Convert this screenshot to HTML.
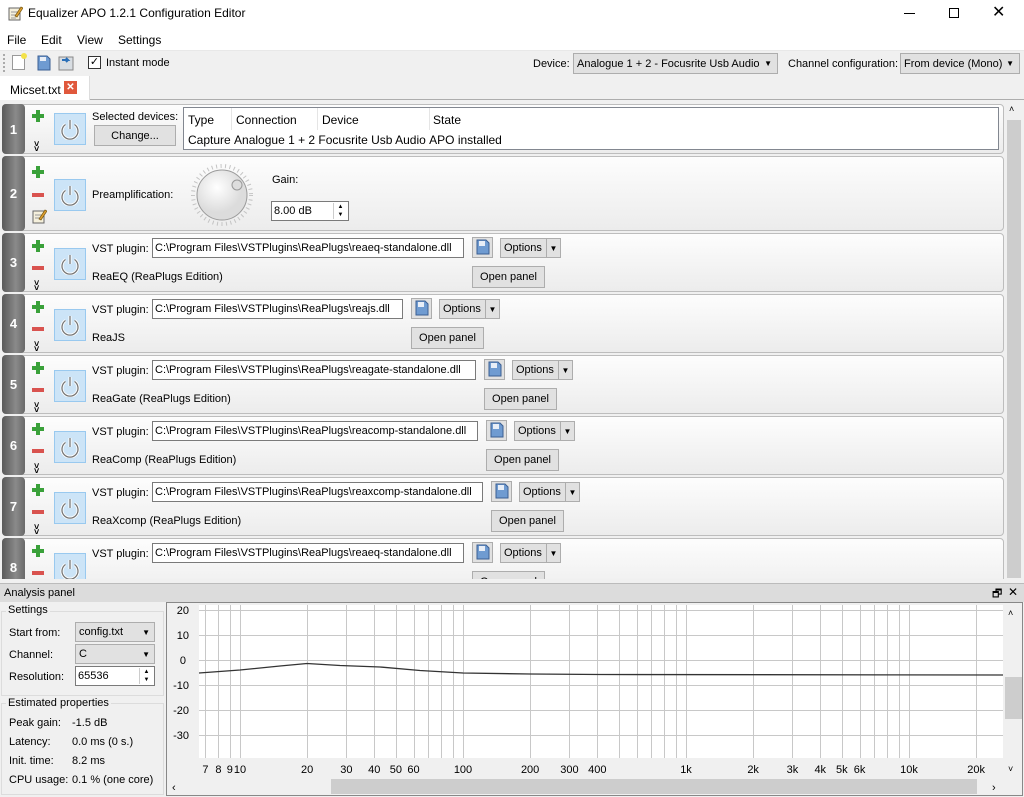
<!DOCTYPE html>
<html><head><meta charset="utf-8"><style>
*{box-sizing:border-box;margin:0;padding:0}
body{width:1024px;height:797px;position:relative;overflow:hidden;background:#f0f0f0;font-family:"Liberation Sans",sans-serif;font-size:11px;color:#000}
.a{position:absolute;white-space:nowrap}
.card{position:absolute;left:2px;width:1002px;border:1px solid #bdbdbd;border-radius:4px;background:linear-gradient(#fdfdfd,#ececec)}
.num{position:absolute;left:2px;width:23px;border-radius:4px;background:linear-gradient(90deg,#5a5a5a,#8a8a8a 60%,#6a6a6a);color:#fff;font-weight:bold;font-size:13px;display:flex;align-items:center;justify-content:center}
.pw{position:absolute;width:32px;height:32px;background:#cce4f7;border:1px solid #99c9ef}
.pw svg{position:absolute;left:4px;top:4px}
.inp{position:absolute;height:20px;background:#fff;border:1px solid #7a7a7a;padding:3px 2px;font-size:11px}
.btn{position:absolute;height:21px;background:#e1e1e1;border:1px solid #adadad;text-align:center;line-height:19px}
.plus{position:absolute;width:12px;height:12px}
.plus:before{content:"";position:absolute;left:4px;top:0;width:4px;height:12px;background:#3aa13a}
.plus:after{content:"";position:absolute;left:0;top:4px;width:12px;height:4px;background:#3aa13a}
.minus{position:absolute;width:12px;height:4px;background:#d9534f}
.chev{position:absolute;font-size:9px;line-height:5px;font-weight:bold}
</style></head><body>
<div class="a" style="left:0;top:0;width:1024px;height:50px;background:#fff"></div>
<svg class="a" style="left:7px;top:5px" width="16" height="16"><rect x="2" y="3" width="11" height="12" fill="#f5f0dc" stroke="#666"/><path d="M4 7h7M4 10h7M4 13h5" stroke="#999"/><path d="M8 11l6-9 2 1-6 9z" fill="#e0a030" stroke="#7a5a10" stroke-width=".7"/></svg>
<div class="a" style="left:28px;top:6px;font-size:12px">Equalizer APO 1.2.1 Configuration Editor</div>
<div class="a" style="left:904px;top:13px;width:11px;height:1px;background:#000"></div>
<div class="a" style="left:949px;top:8px;width:10px;height:10px;border:1px solid #000"></div>
<div class="a" style="left:992px;top:2px;font-size:16px">✕</div>
<div class="a" style="left:7px;top:33px;font-size:12px">File</div>
<div class="a" style="left:41px;top:33px;font-size:12px">Edit</div>
<div class="a" style="left:77px;top:33px;font-size:12px">View</div>
<div class="a" style="left:118px;top:33px;font-size:12px">Settings</div>
<div class="a" style="left:0;top:50px;width:1024px;height:1px;background:#e8e8e8"></div>
<div class="a" style="left:3px;top:54px;width:1px;height:18px;border-left:2px dotted #aaa"></div>
<div class="a" style="left:12px;top:55px;width:13px;height:15px;border:1px solid #999;background:#fff"></div>
<div class="a" style="left:21px;top:53px;width:6px;height:6px;border-radius:50%;background:#f3e24a"></div>
<svg class="a" style="left:35px;top:54px" width="18" height="18"><path d="M3 2h9l3 3v11H3z" fill="#6f9bd1" stroke="#3b5f93"/><rect x="5" y="3" width="6" height="4" fill="#e8eef7"/></svg>
<svg class="a" style="left:57px;top:54px" width="18" height="18"><rect x="2" y="3" width="14" height="13" fill="#d8dde2" stroke="#888"/><path d="M5 6h6l-2 -2M11 6l-2 2" stroke="#2a6fb8" stroke-width="2" fill="none"/></svg>
<div class="a" style="left:88px;top:56px;width:13px;height:13px;border:1px solid #333;background:#fff;font-size:11px;line-height:11px;text-align:center">✓</div>
<div class="a" style="left:106px;top:57px">Instant mode</div>
<div class="a" style="left:533px;top:58px">Device:</div>
<div class="btn" style="left:573px;top:53px;width:205px;text-align:left;padding-left:3px;line-height:20px">Analogue 1 + 2 - Focusrite Usb Audio<span style="position:absolute;right:5px;font-size:8px">▼</span></div>
<div class="a" style="left:788px;top:58px">Channel configuration:</div>
<div class="btn" style="left:900px;top:53px;width:120px;text-align:left;padding-left:3px;line-height:20px">From device (Mono)<span style="position:absolute;right:5px;font-size:8px">▼</span></div>
<div class="a" style="left:0;top:99px;width:1024px;height:1px;background:#adadad"></div>
<div class="a" style="left:0;top:76px;width:90px;height:24px;background:#fff;border-right:1px solid #ddd"></div>
<div class="a" style="left:10px;top:83px;font-size:12px">Micset.txt</div>
<div class="a" style="left:64px;top:81px;width:13px;height:13px;background:#e0583c;color:#fff;font-size:10px;line-height:13px;text-align:center;font-weight:bold">✕</div>
<div class="a" style="left:1005px;top:101px;width:18px;height:478px;background:#f0f0f0"></div>
<div class="a" style="left:1007px;top:120px;width:14px;height:458px;background:#cdcdcd"></div>
<div class="a" style="left:1009px;top:104px;font-size:9px">˄</div>

<div class="card" style="top:104px;height:50px"></div><div class="num" style="top:104px;height:50px">1</div>
<div class="plus" style="left:32px;top:110px"></div><div class="chev" style="left:34px;top:142px">˅<br>˅</div>
<div class="pw" style="left:54px;top:113px"><svg width="22" height="22"><path d="M6.5 6.5A8 8 0 1 0 15.5 6.5" fill="none" stroke="#fff" stroke-width="3"/><path d="M11 2v9" stroke="#fff" stroke-width="3"/><path d="M6.5 6.5A8 8 0 1 0 15.5 6.5M11 2v9" fill="none" stroke="#777" stroke-width="1.3"/></svg></div>
<div class="a" style="left:92px;top:111px">Selected devices:</div>
<div class="btn" style="left:94px;top:125px;width:82px;line-height:20px">Change...</div>
<div class="a" style="left:183px;top:107px;width:816px;height:43px;background:#fff;border:1px solid #828790"></div>
<div class="a" style="left:188px;top:113px;font-size:12px">Type</div>
<div class="a" style="left:231px;top:108px;width:1px;height:22px;background:#e5e5e5"></div>
<div class="a" style="left:236px;top:113px;font-size:12px">Connection</div>
<div class="a" style="left:317px;top:108px;width:1px;height:22px;background:#e5e5e5"></div>
<div class="a" style="left:322px;top:113px;font-size:12px">Device</div>
<div class="a" style="left:429px;top:108px;width:1px;height:22px;background:#e5e5e5"></div>
<div class="a" style="left:433px;top:113px;font-size:12px">State</div>
<div class="a" style="left:188px;top:133px;font-size:12px">Capture&nbsp;Analogue 1 + 2&nbsp;Focusrite Usb Audio&nbsp;APO installed</div>

<div class="card" style="top:156px;height:75px"></div><div class="num" style="top:156px;height:75px">2</div>
<div class="plus" style="left:32px;top:166px"></div><div class="minus" style="left:32px;top:193px"></div>
<svg class="a" style="left:31px;top:208px" width="16" height="16"><rect x="2" y="3" width="11" height="12" fill="#f5f0dc" stroke="#666"/><path d="M4 7h7M4 10h7" stroke="#999"/><path d="M8 11l6-9 2 1-6 9z" fill="#e0a030" stroke="#7a5a10" stroke-width=".7"/></svg>
<div class="pw" style="left:54px;top:179px"><svg width="22" height="22"><path d="M6.5 6.5A8 8 0 1 0 15.5 6.5" fill="none" stroke="#fff" stroke-width="3"/><path d="M11 2v9" stroke="#fff" stroke-width="3"/><path d="M6.5 6.5A8 8 0 1 0 15.5 6.5M11 2v9" fill="none" stroke="#777" stroke-width="1.3"/></svg></div>
<div class="a" style="left:92px;top:189px">Preamplification:</div>
<svg class="a" style="left:190px;top:163px" width="64" height="64"><circle cx="32" cy="32" r="29" fill="none" stroke="#c4c4c4" stroke-width="4" stroke-dasharray="1 3.5"/><circle cx="32" cy="32" r="25" fill="url(#g)" stroke="#9a9a9a"/><defs><radialGradient id="g" cx=".4" cy=".35"><stop offset="0" stop-color="#fff"/><stop offset="1" stop-color="#dcdcdc"/></radialGradient></defs><circle cx="47" cy="22" r="5" fill="#ddd" stroke="#999"/></svg>
<div class="a" style="left:272px;top:174px">Gain:</div>
<div class="inp" style="left:271px;top:201px;width:78px">8.00 dB</div>
<div class="a" style="left:333px;top:203px;width:14px;height:16px;border-left:1px solid #ccc;font-size:6px;text-align:center;line-height:8px">▲<br>▼</div>

<script>
const P='<div class="pw" style="left:54px;top:TOPpx"><svg width="22" height="22"><path d="M6.5 6.5A8 8 0 1 0 15.5 6.5" fill="none" stroke="#fff" stroke-width="3"/><path d="M11 2v9" stroke="#fff" stroke-width="3"/><path d="M6.5 6.5A8 8 0 1 0 15.5 6.5M11 2v9" fill="none" stroke="#777" stroke-width="1.3"/></svg></div>';
const rows=[[3,464,"reaeq-standalone.dll","ReaEQ (ReaPlugs Edition)"],[4,403,"reajs.dll","ReaJS"],[5,476,"reagate-standalone.dll","ReaGate (ReaPlugs Edition)"],[6,478,"reacomp-standalone.dll","ReaComp (ReaPlugs Edition)"],[7,483,"reaxcomp-standalone.dll","ReaXcomp (ReaPlugs Edition)"],[8,464,"reaeq-standalone.dll",""]];
let h="";
for(const [n,e,f,d] of rows){const T=233+61*(n-3);const s=e+8;
h+=`<div class="card" style="top:${T}px;height:59px"></div><div class="num" style="top:${T}px;height:59px">${n}</div>
<div class="plus" style="left:32px;top:${T+7}px"></div><div class="minus" style="left:32px;top:${T+33}px"></div><div class="chev" style="left:34px;top:${T+48}px">˅<br>˅</div>
${P.replace("TOP",T+15)}
<div class="a" style="left:92px;top:${T+10}px">VST plugin:</div>
<div class="inp" style="left:152px;top:${T+5}px;width:${e-152}px">C:\\Program Files\\VSTPlugins\\ReaPlugs\\${f}</div>
<div class="a" style="left:${s}px;top:${T+4}px;width:21px;height:21px;background:#e1e1e1;border:1px solid #adadad"></div>
<svg class="a" style="left:${s+3}px;top:${T+6}px" width="16" height="16"><path d="M2 1h9l3 3v11H2z" fill="#6f9bd1" stroke="#3b5f93"/><rect x="4" y="2" width="6" height="5" fill="#e8eef7"/></svg>
<div class="btn" style="left:${s+28}px;top:${T+5}px;width:61px;height:20px;text-align:left;padding-left:3px">Options<span style="position:absolute;left:45px;top:0;width:14px;height:18px;border-left:1px solid #adadad;font-size:8px;text-align:center">▼</span></div>
<div class="a" style="left:92px;top:${T+38}px">${d}</div>
<div class="btn" style="left:${s}px;top:${T+33}px;width:73px;height:22px;line-height:20px">Open panel</div>`;}
document.write(h);
</script>

<div class="a" style="left:0;top:579px;width:1024px;height:218px;background:#f0f0f0"></div>
<div class="a" style="left:0;top:583px;width:1024px;height:19px;background:#dcdcdc;border-top:1px solid #bbb"></div>
<div class="a" style="left:4px;top:587px">Analysis panel</div>
<div class="a" style="left:992px;top:585px;font-size:11px">🗗</div>
<div class="a" style="left:1008px;top:585px;font-size:12px">✕</div>
<div class="a" style="left:1px;top:611px;width:163px;height:85px;border:1px solid #dcdcdc"></div>
<div class="a" style="left:6px;top:604px;background:#f0f0f0;padding:0 2px">Settings</div>
<div class="a" style="left:9px;top:627px">Start from:</div>
<div class="btn" style="left:75px;top:622px;width:80px;height:20px;text-align:left;padding-left:3px">config.txt<span style="position:absolute;right:4px;font-size:8px">▼</span></div>
<div class="a" style="left:9px;top:649px">Channel:</div>
<div class="btn" style="left:75px;top:644px;width:80px;height:20px;text-align:left;padding-left:3px">C<span style="position:absolute;right:4px;font-size:8px">▼</span></div>
<div class="a" style="left:9px;top:671px">Resolution:</div>
<div class="inp" style="left:75px;top:666px;width:80px">65536</div>
<div class="a" style="left:139px;top:668px;width:14px;height:16px;border-left:1px solid #ccc;font-size:6px;text-align:center;line-height:8px">▲<br>▼</div>
<div class="a" style="left:1px;top:703px;width:163px;height:92px;border:1px solid #dcdcdc"></div>
<div class="a" style="left:6px;top:697px;background:#f0f0f0;padding:0 2px">Estimated properties</div>
<div class="a" style="left:9px;top:717px">Peak gain:</div><div class="a" style="left:72px;top:717px">-1.5 dB</div>
<div class="a" style="left:9px;top:736px">Latency:</div><div class="a" style="left:72px;top:736px">0.0 ms (0 s.)</div>
<div class="a" style="left:9px;top:755px">Init. time:</div><div class="a" style="left:72px;top:755px">8.2 ms</div>
<div class="a" style="left:9px;top:774px">CPU usage:</div><div class="a" style="left:72px;top:774px">0.1 % (one core)</div>
<svg class="a" style="left:0;top:0" width="1024" height="797" font-family="Liberation Sans" font-size="11">
<rect x="166.5" y="602.5" width="856" height="193" fill="#f0f0f0" stroke="#888"/>
<rect x="199" y="605" width="804" height="153" fill="#fff"/>
<g id="gl" stroke="#c8c8c8"></g>
<polyline fill="none" stroke="#333" stroke-width="1.3" points="199,673 240,670 280,666 307,663.5 340,665.5 380,667 420,670.5 463,673 530,674 600,674.5 1003,675"/>
<g text-anchor="end"><text x="189" y="614">20</text><text x="189" y="639">10</text><text x="186" y="664">0</text><text x="189" y="689">-10</text><text x="189" y="714">-20</text><text x="189" y="739">-30</text></g>
<g id="xl" text-anchor="middle"></g>
<rect x="1005" y="604" width="17" height="172" fill="#f0f0f0"/><rect x="1005" y="677" width="17" height="42" fill="#cdcdcd"/>
<text x="1008" y="616" font-size="9">˄</text><text x="1008" y="772" font-size="9">˅</text>
<rect x="168" y="777" width="836" height="18" fill="#f0f0f0"/><rect x="331" y="779" width="646" height="15" fill="#cdcdcd"/>
<text x="172" y="791">‹</text><text x="992" y="791">›</text>
</svg>
<script>
const X=f=>240+223*Math.log10(f/10);let g="",t="";
for(const b of [1,10,100,1000,10000])for(let m=1;m<10;m++){const f=b*m;if(f<7)continue;const x=Math.round(X(f))+.5;if(x>1003)continue;g+=`<line x1="${x}" y1="605" x2="${x}" y2="758"/>`;}
for(const y of [610,635,660,685,710,735])g+=`<line x1="199" y1="${y+.5}" x2="1003" y2="${y+.5}"/>`;
const L={7:"7",8:"8",9:"9",10:"10",20:"20",30:"30",40:"40",50:"50",60:"60",100:"100",200:"200",300:"300",400:"400",1000:"1k",2000:"2k",3000:"3k",4000:"4k",5000:"5k",6000:"6k",10000:"10k",20000:"20k"};
for(const k in L)t+=`<text x="${X(+k)}" y="773">${L[k]}</text>`;
document.getElementById("gl").innerHTML=g;document.getElementById("xl").innerHTML=t;
</script>
</body></html>
